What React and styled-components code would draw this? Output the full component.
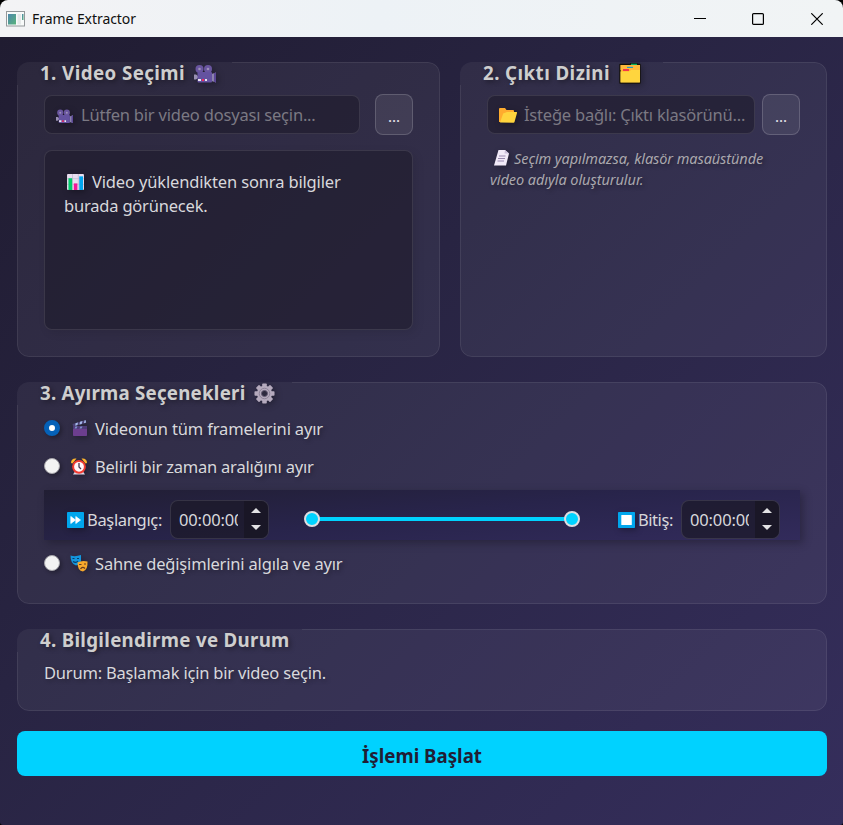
import React from "react";
import styled, { createGlobalStyle } from "styled-components";

const GlobalStyle = createGlobalStyle`
  * { box-sizing: border-box; }
  body { margin: 0; background: #000; }
  #root { font-family: "Noto Sans", "Open Sans", sans-serif; }
`;

const Window = styled.div`
  width: 843px;
  height: 825px;
  display: flex;
  flex-direction: column;
  overflow: hidden;
  border-radius: 8px 8px 3px 3px;
  color: #d8d8dc;
  font-size: 16.5px;
`;

const TitleBar = styled.header`
  height: 37px;
  display: flex;
  align-items: center;
  padding-left: 6px;
  background: linear-gradient(90deg, #f3f3f5, #edf2f6 45%, #f1f4f5);
  color: #101010;
`;

const WindowTitle = styled.h1`
  flex: 1;
  margin: 0 0 0 7px;
  font-size: 14px;
  line-height: 20px;
  font-weight: 400;
`;

const WindowButton = styled.button`
  width: 58.5px;
  height: 37px;
  padding: 0;
  border: 0;
  background: none;
  display: flex;
  align-items: center;
  justify-content: center;
`;

const WindowButtons = styled.div`
  display: flex;
  margin-right: -3px;
`;

const Body = styled.main`
  flex: 1;
  padding: 25px 16px 0 17px;
  background: linear-gradient(135deg, #201c31 0%, #282442 40%, #352e5c 100%);
`;

const TopRow = styled.div`
  display: grid;
  grid-template-columns: 423px 367px;
  gap: 20px;
`;

const Panel = styled.section`
  position: relative;
  height: ${(p) => p.$height}px;
  margin-bottom: ${(p) => p.$after || 25}px;
  padding: 0 27px;
  border-radius: 12px;
  background: rgba(255, 255, 255, 0.05);

  &::before {
    content: "";
    position: absolute;
    inset: 0;
    border: 1px solid rgba(255, 255, 255, 0.08);
    border-radius: 12px;
    pointer-events: none;
    mask:
      linear-gradient(#000 0 0) right top / calc(100% - ${(p) => p.$notch}px) 100% no-repeat,
      linear-gradient(#000 0 0) left bottom / 100% calc(100% - 23px) no-repeat;
  }
`;

const PanelTitle = styled.h2`
  height: 22px;
  margin: 0 0 0 ${(p) => p.$shift || -4}px;
  display: flex;
  align-items: center;
  font-size: 18.7px;
  font-weight: 700;
  line-height: 22px;
  color: #cecece;
  text-shadow: 2px 2px 5px rgba(0, 0, 0, 0.4);
`;

const Text = styled.span`
  white-space: nowrap;
  letter-spacing: ${(p) => p.$track || 0}px;
`;

const Glyph = styled.svg`
  display: block;
  flex: none;
  width: ${(p) => p.$w}px;
  height: ${(p) => p.$h}px;
  margin: ${(p) => p.$m || 0};
  filter: drop-shadow(2px 2px 3px rgba(0, 0, 0, 0.3));
`;

const PickerRow = styled.div`
  display: flex;
  align-items: center;
  gap: ${(p) => p.$gap}px;
  height: 41px;
  margin-top: 10px;
`;

const PathField = styled.div`
  flex: 1;
  height: 39px;
  display: flex;
  align-items: center;
  padding-left: 11px;
  border: 1px solid rgba(255, 255, 255, 0.1);
  border-radius: 8px;
  background: rgba(30, 27, 43, 0.6);
  color: #7b7983;
  overflow: hidden;
`;

const BrowseButton = styled.button`
  width: 38px;
  height: 41px;
  padding: 2px 0 0;
  border: 1px solid rgba(255, 255, 255, 0.17);
  border-radius: 8px;
  background: rgba(255, 255, 255, 0.08);
  color: #dedee2;
  font: 500 15px "Noto Sans", sans-serif;
`;

const InfoBox = styled.div`
  height: 180px;
  margin-top: 15px;
  padding: 19px;
  border: 1px solid rgba(255, 255, 255, 0.1);
  border-radius: 8px;
  background: rgba(30, 27, 43, 0.6);
  line-height: 24px;
  box-shadow: 3px 3px 10px rgba(0, 0, 0, 0.09);
`;

const Line = styled.div`
  display: flex;
  align-items: center;
  height: ${(p) => p.$h}px;
`;

const Note = styled.div`
  margin: 12px 0 0 3px;
  font-size: 14.5px;
  font-style: italic;
  color: #aaa8ae;
  text-shadow: 2px 2px 4px rgba(0, 0, 0, 0.35);
`;

const Option = styled.label`
  display: flex;
  align-items: center;
  height: 38px;
  text-shadow: 2px 2px 4px rgba(0, 0, 0, 0.3);
`;

const Options = styled.div`
  padding-top: 5px;
`;

const Radio = styled.input`
  appearance: none;
  flex: none;
  width: 16px;
  height: 16px;
  margin: 0;
  border-radius: 50%;
  border: ${(p) => (p.defaultChecked ? "5px solid #0561b8" : "1px solid #a6a5ab")};
  background: ${(p) => (p.defaultChecked ? "#fff" : "#f3f3f3")};
  box-shadow: 2px 2px 4px rgba(0, 0, 0, 0.3);
`;

const TimeRange = styled.div`
  display: flex;
  align-items: center;
  height: 50px;
  margin: 5px 0 4px;
  padding: 9px 20px 0 23px;
  background: linear-gradient(174deg, #211e33, #28244b 50%, #322b5b);
  box-shadow: 3px 3px 8px rgba(20, 18, 30, 0.4);
`;

const Spin = styled.div`
  flex: none;
  width: 99px;
  height: 39px;
  display: flex;
  border: 1px solid rgba(255, 255, 255, 0.11);
  border-radius: 8px;
  background: rgba(28, 25, 42, 0.75);
  overflow: hidden;
  margin-left: ${(p) => p.$before}px;
`;

const SpinValue = styled.div`
  width: 67px;
  margin-right: 6px;
  padding-left: 8px;
  line-height: 38px;
  overflow: hidden;
`;

const SpinArrows = styled.div`
  flex: 1;
  display: flex;
  flex-direction: column;
  align-items: center;
  justify-content: space-between;
  padding: 7px 1px 8px 0;
  background: rgba(24, 21, 35, 0.75);
`;

const Arrow = styled.i`
  border: 5px solid transparent;
  border-top-width: ${(p) => (p.$up ? 0 : 5)}px;
  border-bottom-width: ${(p) => (p.$up ? 5 : 0)}px;
  border-${(p) => (p.$up ? "bottom" : "top")}-color: #e2e2e4;
`;

const Track = styled.div`
  flex: none;
  display: flex;
  align-items: center;
  justify-content: space-between;
  width: 276px;
  height: 16px;
  margin: 0 auto 2px 35px;
  background: linear-gradient(#00d2ff 0 0) center / 262px 4px no-repeat;
`;

const Handle = styled.span`
  width: 16px;
  height: 16px;
  border: 2px solid #dedee2;
  border-radius: 50%;
  background: #00d2ff;
`;

const Status = styled.p`
  margin: 11px 0 0;
  line-height: 22px;
  text-shadow: 2px 2px 4px rgba(0, 0, 0, 0.3);
`;

const StartButton = styled.button`
  display: block;
  width: 100%;
  height: 45px;
  padding: 5px 0 0;
  border: 0;
  border-radius: 8px;
  background: #00d2ff;
  color: #211d35;
  font: 700 18.7px/24px "Noto Sans", sans-serif;
`;

const Camera = (p) => (
  <Glyph viewBox="0 0 22 18" {...p}>
    <path d="M17.5 9l4.5-1.5v10L17.500 16z" fill="#8c83ac" />
    <path d="M20 8.300l2-.8v10l-2-.8z" fill="#5b4796" />
    <path d="M0 9.500h2l2 1.500v2l-2 1.500H0z" fill="#9990b2" />
    <circle cx="5.500" cy="4" r="4" fill="#69559f" />
    <circle cx="14" cy="4" r="4" fill="#69559f" />
    <rect x="3.500" y="7" width="14.500" height="10.500" rx="1" fill="#6452a0" />
    <circle cx="5.500" cy="4" r="1.300" fill="#9c91b7" />
    <circle cx="14" cy="4" r="1.300" fill="#9c91b7" />
    <path d="M4 14h3v2H4zM11 14h2v2h-2z" fill="#eee7f1" />
    <path d="M8 14h2v2H8z" fill="#ee245f" />
  </Glyph>
);

const Dividers = (p) => (
  <Glyph viewBox="0 0 22 21" {...p}>
    <path d="M1 1.500h10.500V.7H18v.8h3V20H1z" fill="#ffb52c" stroke="#14110b" strokeWidth="1.400" strokeLinejoin="round" />
    <path d="M12 .7h6v1.200h-6z" fill="#00b86a" />
    <path d="M1.500 2h19.500v5H1.500z" fill="#ffb83a" />
    <path d="M8 3.800h6V5H8z" fill="#2a9bc3" />
    <path d="M4 6h6v2H4z" fill="#f5354a" />
    <path d="M1.500 8.500H10L12 7h9v12.500H1.500z" fill="#ffd53e" />
  </Glyph>
);

const Folder = (p) => (
  <Glyph viewBox="0 0 18 15" {...p}>
    <path d="M0 1q0-1 1-1h5l1.500 2H14q1 0 1 1v11H0z" fill="#ffac2e" />
    <path d="M1 14.500L4 6q.4-1 1.500-1L8 4h9.500q.7 0 .5 1l-2.500 9q-.2.800-1 .8z" fill="#ffd43d" />
  </Glyph>
);

const Page = (p) => (
  <Glyph viewBox="0 0 15 16" {...p}>
    <path d="M4.500 0H11l4 3.500L12 15.500H0z" fill="#f1eaf8" />
    <path d="M11 0l4 3.500h-4.500z" fill="#cbbfdb" />
    <path d="M5 6h6.500M4 8.500h7M3.500 11h6.500" stroke="#9788ad" strokeWidth="1.200" />
  </Glyph>
);

const Chart = (p) => (
  <Glyph viewBox="0 0 18 17" {...p}>
    <rect width="18" height="17" rx="1" fill="#e8def0" />
    <path d="M0 5h18M0 11h18M5.800 0v17M12 0v17" stroke="#c4b7d1" strokeWidth=".8" />
    <path d="M1.500 4.500h4V17h-4z" fill="#00cb6b" />
    <path d="M7.200 10h3.800v7H7.200z" fill="#f5149a" />
    <path d="M13 2.500h4V17h-4z" fill="#00a5ed" />
  </Glyph>
);

const Gear = (p) => (
  <Glyph viewBox="-11 -11 22 22" {...p}>
    {[0, 45, 90, 135].map((a) => (
      <rect key={a} x="-2.400" y="-10.500" width="4.800" height="21" rx=".8" fill="#b5aabd" transform={`rotate(${a})`} />
    ))}
    <circle r="8" fill="#b5aabd" />
    <circle r="5.500" fill="none" stroke="#8b8096" strokeWidth="1" />
    <circle r="3.200" fill="#2d293e" stroke="#665b74" strokeWidth="1" />
  </Glyph>
);

const Clapper = (p) => (
  <Glyph viewBox="0 0 15 16" {...p}>
    <path d="M.5 4L13.500 0l.8 2.800L1.300 6.500z" fill="#4d4375" />
    <path d="M3.500 3.200l2.500-.8L5.500 5l-2.200.7zM8 1.800l2.500-.8-.8 3-2.200.6zM12.500.4l1-.4.6 2.600-2.200.7z" fill="#a5b9ed" />
    <rect x="1" y="6" width="14" height="10" rx=".8" fill="#6c3e8e" />
    <path d="M1 6h14v3H1z" fill="#4e3c79" />
    <path d="M3.500 6.500h2L4.500 8.500h-2zM8.500 6.500h2l-1 2h-2z" fill="#8090cc" />
  </Glyph>
);

const Alarm = (p) => (
  <Glyph viewBox="0 0 16 17" {...p}>
    <path d="M0 5Q0 0 5.500.5L1.500 5.500zM16 5Q16 0 10.500.5l4 5z" fill="#ffb52c" />
    <path d="M2 16.500l2-3h8l2 3z" fill="#ded5e5" />
    <circle cx="8" cy="8.800" r="5.900" fill="#fff6fa" stroke="#f23b32" strokeWidth="2" />
    <path d="M8 5v4l2 2" fill="none" stroke="#453951" strokeWidth="1.300" />
  </Glyph>
);

const FastForward = (p) => (
  <Glyph viewBox="0 0 17 16" {...p}>
    <rect width="17" height="16" rx=".8" fill="#00a6ed" />
    <path d="M3.800 4.500l4.700 3.500-4.700 3.500zM8.800 4.500L13.500 8l-4.700 3.500z" fill="#fff" stroke="#fff" strokeWidth=".7" strokeLinejoin="round" />
  </Glyph>
);

const StopSquare = (p) => (
  <Glyph viewBox="0 0 17 16" {...p}>
    <rect width="17" height="16" rx=".8" fill="#00a6ed" />
    <rect x="3.300" y="3" width="10.500" height="10" rx=".6" fill="#fff" />
  </Glyph>
);

const Masks = (p) => (
  <Glyph viewBox="0 0 18 17" {...p}>
    <path d="M.5.500Q5 2 11 0v5.500q0 4-5 5Q.5 9 .5.500z" fill="#1396dd" />
    <path d="M2.500 3.500h2M7 3.500h2M3 6.500q3 2 5-.5" fill="none" stroke="#0b3b65" strokeWidth="1.100" />
    <path d="M7.500 7.500Q12 5 17.500 6.500 18 15 13 16.500 7.500 16 7.500 7.500z" fill="#f8a92c" />
    <path d="M9 9.500h2.500M14 9h2M10.500 14q2-3 4.500-.5" fill="none" stroke="#673c20" strokeWidth="1.200" />
  </Glyph>
);

const AppIcon = () => (
  <svg width="19" height="16" viewBox="0 0 19 16">
    <defs>
      <linearGradient id="pane" x1="0" y1="0" x2="1" y2="1">
        <stop offset="0" stopColor="#4d87ad" />
        <stop offset="1" stopColor="#59b37b" />
      </linearGradient>
    </defs>
    <rect x=".5" y=".5" width="18" height="14.500" fill="#f8fafa" stroke="#94989b" />
    <rect x="2" y="3" width="8" height="10.500" fill="url(#pane)" />
    <rect x="11.500" y="3" width="3.500" height="10.500" fill="#e5e8e9" />
    <rect x="16" y="3" width="1.500" height="6" fill="url(#pane)" />
  </svg>
);

const TimeSpin = ({ before }) => (
  <Spin $before={before}>
    <SpinValue><Text $track={-0.15}>00:00:00</Text></SpinValue>
    <SpinArrows><Arrow $up /><Arrow /></SpinArrows>
  </Spin>
);

export default function App() {
  return (
    <>
      <GlobalStyle />
      <Window>
        <TitleBar>
          <AppIcon />
          <WindowTitle><Text $track={-0.06}>Frame Extractor</Text></WindowTitle>
          <WindowButtons>
            <WindowButton aria-label="Minimize">
              <svg width="12" height="12"><path d="M0 5.500h12" stroke="#000" /></svg>
            </WindowButton>
            <WindowButton aria-label="Maximize">
              <svg width="12" height="12"><rect x=".6" y=".6" width="10.800" height="10.800" rx="1" fill="none" stroke="#000" strokeWidth="1.200" /></svg>
            </WindowButton>
            <WindowButton aria-label="Close">
              <svg width="12" height="12"><path d="M.3.300l11.400 11.400M11.700.300L.3 11.700" stroke="#000" strokeWidth="1.200" /></svg>
            </WindowButton>
          </WindowButtons>
        </TitleBar>
        <Body>
          <TopRow>
            <Panel $height={295} $notch={215}>
              <PanelTitle>
                <Text $track={0.43}>1. Video Seçimi</Text>
                <Camera $w={22} $h={18} $m="2px 0 0 9px" />
              </PanelTitle>
              <PickerRow $gap={15}>
                <PathField>
                  <Camera $w={17} $h={15} $m="3px 8px 0 0" />
                  <Text $track={-0.2}>Lütfen bir video dosyası seçin...</Text>
                </PathField>
                <BrowseButton>...</BrowseButton>
              </PickerRow>
              <InfoBox>
                <Line $h={24}>
                  <Chart $w={17} $h={16} $m="0 8px 0 3px" />
                  <Text $track={-0.15}>Video yüklendikten sonra bilgiler</Text>
                </Line>
                <Line $h={24}><Text $track={-0.2}>burada görünecek.</Text></Line>
              </InfoBox>
            </Panel>
            <Panel $height={295} $notch={203}>
              <PanelTitle>
                <Text $track={0.44}>2. Çıktı Dizini</Text>
                <Dividers $w={22} $h={21} $m="0 0 0 9px" />
              </PanelTitle>
              <PickerRow $gap={7}>
                <PathField>
                  <Folder $w={18} $h={15} $m="2px 7px 0 0" />
                  <Text $track={-0.22}>İsteğe bağlı: Çıktı klasörünü...</Text>
                </PathField>
                <BrowseButton>...</BrowseButton>
              </PickerRow>
              <Note>
                <Line $h={21}>
                  <Page $w={15} $h={16} $m="0 5px 0 4px" />
                  <Text $track={-0.08}>Seçim yapılmazsa, klasör masaüstünde</Text>
                </Line>
                <Line $h={21}><Text $track={-0.05}>video adıyla oluşturulur.</Text></Line>
              </Note>
            </Panel>
          </TopRow>
          <Panel $height={222} $notch={275}>
            <PanelTitle>
              <Text $track={0.24}>3. Ayırma Seçenekleri</Text>
              <Gear $w={21} $h={21} $m="0 0 0 9px" />
            </PanelTitle>
            <Options>
              <Option>
                <Radio type="radio" name="mode" defaultChecked />
                <Clapper $w={15} $h={16} $m="0 8px 0 12px" />
                <Text $track={-0.16}>Videonun tüm framelerini ayır</Text>
              </Option>
              <Option>
                <Radio type="radio" name="mode" />
                <Alarm $w={16} $h={17} $m="0 8px 0 11px" />
                <Text $track={-0.21}>Belirli bir zaman aralığını ayır</Text>
              </Option>
              <TimeRange>
                <FastForward $w={17} $h={16} $m="0 3px 0 0" />
                <Text $track={-0.33}>Başlangıç:</Text>
                <TimeSpin before={8} />
                <Track><Handle /><Handle /></Track>
                <StopSquare $w={17} $h={16} $m="0 3px 0 0" />
                <Text $track={-0.4}>Bitiş:</Text>
                <TimeSpin before={8} />
              </TimeRange>
              <Option>
                <Radio type="radio" name="mode" />
                <Masks $w={18} $h={17} $m="0 7px 0 10px" />
                <Text $track={-0.18}>Sahne değişimlerini algıla ve ayır</Text>
              </Option>
            </Options>
          </Panel>
          <Panel $height={82} $notch={285} $after={20}>
            <PanelTitle><Text $track={0.31}>4. Bilgilendirme ve Durum</Text></PanelTitle>
            <Status><Text $track={-0.2}>Durum: Başlamak için bir video seçin.</Text></Status>
          </Panel>
          <StartButton><Text>İşlemi Başlat</Text></StartButton>
        </Body>
      </Window>
    </>
  );
}
